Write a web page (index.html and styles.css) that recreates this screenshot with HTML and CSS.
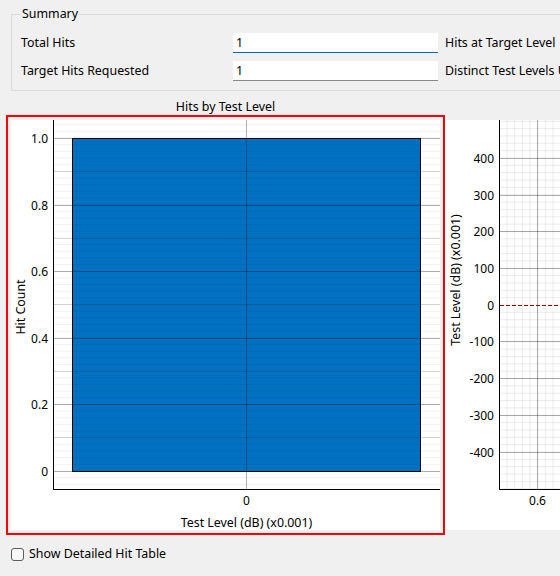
FILE: index.html
```html
<!DOCTYPE html>
<html>
<head>
<meta charset="utf-8">
<link rel="stylesheet" href="styles.css">
</head>
<body>
<fieldset class="summary">
  <legend class="summary-title">Summary</legend>
  <div class="summary-grid">
    <span class="lbl">Total Hits</span>
    <input class="field field-focus" type="text" value="1">
    <span class="lbl lbl-right">Hits at Target Level</span>
    <span class="lbl">Target Hits Requested</span>
    <input class="field" type="text" value="1">
    <span class="lbl lbl-right">Distinct Test Levels Used</span>
  </div>
</fieldset>

<div class="charts">
  <div class="chart-title">Hits by Test Level</div>
  <div class="chart-title"></div>
  <div class="panel panel-left">
    <svg class="plot" width="429" height="410" viewBox="0 0 429 410">
      <defs>
        <pattern id="p1minor" patternUnits="userSpaceOnUse" x="0" y="4.18" width="429" height="6.66">
          <rect x="0" y="0" width="429" height="1" fill="#000" fill-opacity="0.055"/>
        </pattern>
      </defs>
      <rect x="61.5" y="18.5" width="348" height="333" fill="#0070c0" stroke="#000" stroke-width="1"/>
      <rect x="42" y="0" width="387" height="370" fill="url(#p1minor)"/>
      <g stroke="#000" stroke-opacity="0.13" stroke-width="1">
        <line x1="42" y1="51.5" x2="429" y2="51.5"/>
        <line x1="42" y1="118.5" x2="429" y2="118.5"/>
        <line x1="42" y1="184.5" x2="429" y2="184.5"/>
        <line x1="42" y1="251.5" x2="429" y2="251.5"/>
        <line x1="42" y1="317.5" x2="429" y2="317.5"/>
      </g>
      <g stroke="#000" stroke-opacity="0.3" stroke-width="1">
        <line x1="42" y1="18.5" x2="429" y2="18.5"/>
        <line x1="42" y1="85.5" x2="429" y2="85.5"/>
        <line x1="42" y1="151.5" x2="429" y2="151.5"/>
        <line x1="42" y1="218.5" x2="429" y2="218.5"/>
        <line x1="42" y1="284.5" x2="429" y2="284.5"/>
        <line x1="42" y1="351.5" x2="429" y2="351.5"/>
        <line x1="235.5" y1="0" x2="235.5" y2="370"/>
      </g>
      <g stroke="#000" stroke-width="1">
        <line x1="42.5" y1="0" x2="42.5" y2="370"/>
        <line x1="42" y1="369.5" x2="429" y2="369.5"/>
      </g>
      <g class="tick" text-anchor="end">
        <text x="37" y="22.5">1.0</text>
        <text x="37" y="89.5">0.8</text>
        <text x="37" y="155.5">0.6</text>
        <text x="37" y="222.5">0.4</text>
        <text x="37" y="288.5">0.2</text>
        <text x="37" y="355.5">0</text>
      </g>
      <text class="tick" x="235.5" y="384.5" text-anchor="middle">0</text>
      <text class="axis-title" x="235.5" y="406.5" text-anchor="middle">Test Level (dB) (x0.001)</text>
      <text class="axis-title" transform="translate(13.5 187) rotate(-90)" text-anchor="middle">Hit Count</text>
    </svg>
  </div>
  <div class="panel panel-right">
    <svg class="plot" width="400" height="410" viewBox="0 0 400 410">
      <defs>
        <pattern id="p2h" patternUnits="userSpaceOnUse" x="0" y="0.75" width="400" height="7.35">
          <rect x="0" y="0" width="400" height="1" fill="#000" fill-opacity="0.075"/>
        </pattern>
        <pattern id="p2v" patternUnits="userSpaceOnUse" x="0.04" y="0" width="7.68" height="410">
          <rect x="0" y="0" width="1" height="410" fill="#000" fill-opacity="0.075"/>
        </pattern>
      </defs>
      <rect x="55" y="0" width="345" height="370" fill="url(#p2h)"/>
      <rect x="55" y="0" width="345" height="370" fill="url(#p2v)"/>
      <g stroke="#000" stroke-opacity="0.3" stroke-width="1">
        <line x1="55" y1="38.5" x2="400" y2="38.5"/>
        <line x1="55" y1="75.5" x2="400" y2="75.5"/>
        <line x1="55" y1="111.5" x2="400" y2="111.5"/>
        <line x1="55" y1="148.5" x2="400" y2="148.5"/>
        <line x1="55" y1="221.5" x2="400" y2="221.5"/>
        <line x1="55" y1="258.5" x2="400" y2="258.5"/>
        <line x1="55" y1="295.5" x2="400" y2="295.5"/>
        <line x1="55" y1="332.5" x2="400" y2="332.5"/>
        <line x1="92.5" y1="0" x2="92.5" y2="370"/>
      </g>
      <line x1="55" y1="185.5" x2="400" y2="185.5" stroke="#8b0000" stroke-width="1" stroke-dasharray="4 2"/>
      <g stroke="#000" stroke-width="1">
        <line x1="54.5" y1="0" x2="54.5" y2="370"/>
        <line x1="54" y1="369.5" x2="400" y2="369.5"/>
      </g>
      <g class="tick" text-anchor="end">
        <text x="49" y="42.5">400</text>
        <text x="49" y="79.5">300</text>
        <text x="49" y="116">200</text>
        <text x="49" y="152.5">100</text>
        <text x="49" y="189.5">0</text>
        <text x="49" y="226">-100</text>
        <text x="49" y="263">-200</text>
        <text x="49" y="300">-300</text>
        <text x="49" y="336.5">-400</text>
      </g>
      <text class="tick" x="92.5" y="384.5" text-anchor="middle">0.6</text>
      <text class="axis-title" transform="translate(14.5 160) rotate(-90)" text-anchor="middle">Test Level (dB) (x0.001)</text>
    </svg>
  </div>
</div>

<label class="check">
  <input class="check-input" type="checkbox">
  <span class="check-box"></span>
  <span class="check-text">Show Detailed Hit Table</span>
</label>
</body>
</html>
```

FILE: styles.css
```css
html, body {
  margin: 0;
  padding: 0;
}
body {
  width: 560px;
  height: 576px;
  overflow: hidden;
  background: #f0f0f0;
  color: #000;
  font-family: "Noto Sans", "Liberation Sans", sans-serif;
  font-size: 12.4px;
}

.summary {
  margin: 7px 0 0 11px;
  padding: 12px 0 9px 9px;
  width: 800px;
  border: 1px solid #dcdcdc;
  box-sizing: border-box;
  min-width: 0;
}
.summary-title {
  padding: 0 1px;
  margin-left: 0;
  line-height: 14px;
  height: 14px;
}
.summary-grid {
  display: grid;
  grid-template-columns: 212px 205px auto;
  grid-auto-rows: 20px;
  row-gap: 8px;
  align-items: center;
}
.lbl {
  line-height: 16px;
  white-space: nowrap;
}
.lbl-right {
  padding-left: 7px;
}
.field {
  box-sizing: border-box;
  width: 205px;
  height: 20px;
  margin: 0;
  padding: 0 3px;
  border: none;
  border-bottom: 1px solid #8a8a8a;
  background: #fff;
  font-family: inherit;
  font-size: 12.4px;
  color: #000;
  outline: none;
}
.field-focus {
  border-bottom-color: #0067c0;
}

.charts {
  display: grid;
  grid-template-columns: 429px 400px;
  grid-template-rows: 16px 410px;
  column-gap: 5px;
  row-gap: 5px;
  margin: 8px 0 0 11px;
}
.chart-title {
  text-align: center;
  line-height: 16px;
  white-space: nowrap;
}
.panel {
  background: #fff;
  height: 410px;
  overflow: hidden;
}
.panel-left {
  outline: 2px solid #ff0000;
  outline-offset: 3px;
}
.plot {
  display: block;
}
.tick {
  font-family: "Noto Sans", "Liberation Sans", sans-serif;
  font-size: 12px;
  fill: #000;
}
.axis-title {
  font-family: "Noto Sans", "Liberation Sans", sans-serif;
  font-size: 12.4px;
  fill: #000;
}

.check {
  display: flex;
  align-items: center;
  margin: 16px 0 0 11px;
  height: 16px;
}
.check-input {
  display: none;
}
.check-box {
  box-sizing: border-box;
  width: 13px;
  height: 13px;
  border: 1px solid #5c5c5c;
  border-radius: 3px;
  background: #f7f7f7;
}
.check-text {
  margin-left: 5px;
  line-height: 16px;
}
```
